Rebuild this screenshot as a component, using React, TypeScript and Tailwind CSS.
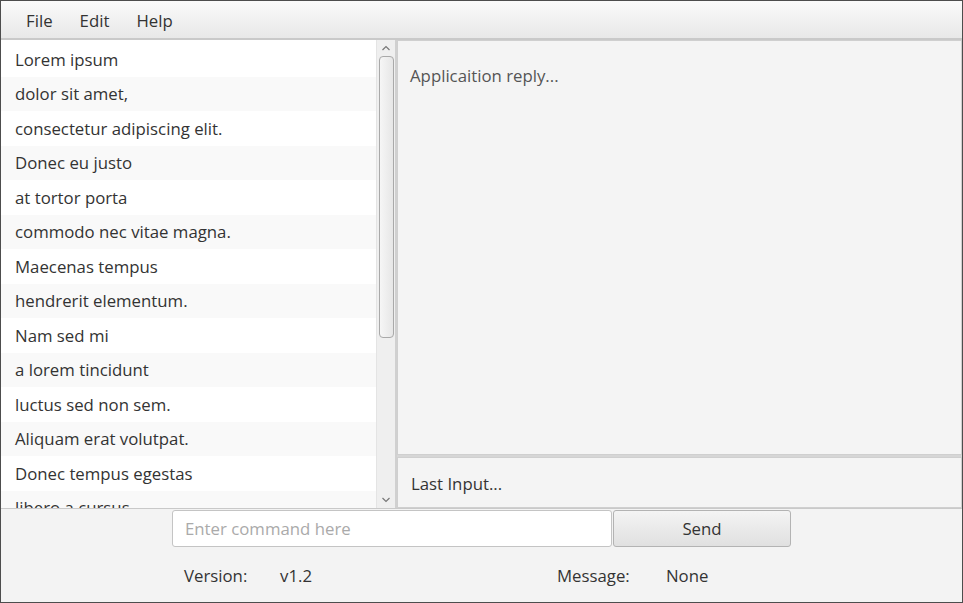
import React from 'react';

const items = [
  'Lorem ipsum',
  'dolor sit amet,',
  'consectetur adipiscing elit.',
  'Donec eu justo',
  'at tortor porta',
  'commodo nec vitae magna.',
  'Maecenas tempus',
  'hendrerit elementum.',
  'Nam sed mi',
  'a lorem tincidunt',
  'luctus sed non sem.',
  'Aliquam erat volutpat.',
  'Donec tempus egestas',
  'libero a cursus',
];

const font = { fontFamily: '"Segoe UI", "Open Sans", "Noto Sans", sans-serif' };

const App = () => {
  return (
    <div
      className="flex h-[603px] w-[963px] flex-col overflow-hidden border border-[#4d4d4d] bg-[#f3f3f3] text-[16.8px] text-[#333]"
      style={font}
    >
      {/* menu bar */}
      <div className="flex h-[39px] shrink-0 items-center gap-[27px] border-b-2 border-[#c9c9c9] bg-gradient-to-b from-[#fafafa] to-[#e8e8e8] pl-[25px] pt-[3px]">
        <span>File</span>
        <span>Edit</span>
        <span>Help</span>
      </div>

      {/* split pane */}
      <div className="flex h-[468px] shrink-0">
        <div className="flex w-[394px] shrink-0">
          <div className="w-[375px] overflow-hidden bg-white pt-[2px]">
            {items.map((t, i) => (
              <div
                key={t}
                className={
                  'flex h-[34.5px] items-center whitespace-nowrap pl-[14px] ' +
                  (i % 2 === 1 ? 'bg-[#f9f9f9]' : 'bg-white')
                }
              >
                {t}
              </div>
            ))}
          </div>
          <div className="flex w-[19px] flex-col items-center border-l border-[#e4e4e4] bg-[#efefef]">
            <svg width="10" height="16" viewBox="0 0 10 16" className="shrink-0">
              <path d="M1.5 10 L5 6.5 L8.5 10" fill="none" stroke="#777" strokeWidth="1.2" />
            </svg>
            <div className="h-[282px] w-[15px] rounded-[4px] border border-[#a9a9a9] bg-gradient-to-r from-[#f6f6f6] to-[#e6e6e6]"></div>
            <div className="flex-1"></div>
            <svg width="10" height="14" viewBox="0 0 10 14" className="shrink-0">
              <path d="M1.5 4 L5 7.5 L8.5 4" fill="none" stroke="#777" strokeWidth="1.2" />
            </svg>
          </div>
        </div>
        <div className="w-[2px] bg-[#d0d0d0]"></div>
        <div className="flex flex-1 flex-col">
          <div className="h-[415px] border border-[#cfcfcf] bg-[#f4f4f4] px-[12px] pt-[22px] text-[#555]">
            Applicaition reply...
          </div>
          <div className="h-[2px] bg-[#d6d6d6]"></div>
          <div className="flex flex-1 items-center border border-[#cfcfcf] bg-[#f4f4f4] px-[13px] pt-[3px]">
            Last Input...
          </div>
        </div>
      </div>

      {/* bottom */}
      <div className="flex flex-1 flex-col border-t border-[#c9c9c9]">
        <div className="mt-[1px] flex h-[37px] pl-[171px]">
          <div className="flex w-[440px] items-center rounded-[3px] border border-[#c4c4c4] bg-white pl-[12px] text-[#aaa]">
            Enter command here
          </div>
          <div className="ml-[1px] flex w-[178px] items-center justify-center rounded-[3px] border border-[#b3b3b3] bg-gradient-to-b from-[#f4f4f4] to-[#e0e0e0]">
            Send
          </div>
        </div>
        <div className="mt-[16px] flex items-center">
          <span className="ml-[183px] w-[96px]">Version:</span>
          <span>v1.2</span>
          <span className="ml-[245px] w-[109px]">Message:</span>
          <span>None</span>
        </div>
      </div>
    </div>
  );
};

export default App;
